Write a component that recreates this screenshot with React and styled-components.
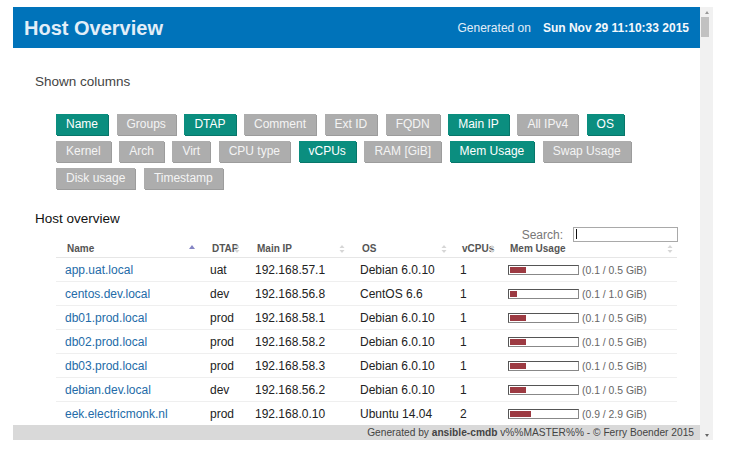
import React from 'react';
import styled, { createGlobalStyle } from 'styled-components';

const GlobalStyle = createGlobalStyle`
	html, body {
		margin: 0;
		padding: 0;
		background: #fff;
	}
	body {
		font-family: "Liberation Sans", Arial, sans-serif;
	}
`;

const Frame = styled.div`
	display: flex;
	width: 700px;
	height: 433px;
	margin: 7px 0 0 13px;
`;

const Viewport = styled.div`
	position: relative;
	flex: 1;
	overflow: hidden;
	background: #fff;
`;

const Scrollbar = styled.div`
	width: 13px;
	background: #f1f1f1;
	display: flex;
	flex-direction: column;
`;

const ScrollArrow = styled.div`
	height: 10px;
	display: flex;
	align-items: center;
	justify-content: center;
	padding-left: 1px;

	&::before {
		content: '';
		width: 0;
		height: 0;
		border-left: 2.5px solid transparent;
		border-right: 2.5px solid transparent;
		${(p) => (p.$down
			? 'border-top: 3px solid #666;'
			: 'border-bottom: 3px solid #999;')}
	}
`;

const ScrollThumb = styled.div`
	width: 8px;
	height: 20px;
	margin-left: 1px;
	background: #c1c1c1;
`;

const ScrollSpace = styled.div`
	flex: 1;
`;

const Header = styled.header`
	display: flex;
	align-items: center;
	justify-content: space-between;
	height: 41px;
	padding: 0 11px;
	background: #0073ba;
	color: #e2eef8;
`;

const Title = styled.h1`
	margin: 0;
	font-size: 20px;
	font-weight: bold;
	line-height: 1;
`;

const Generated = styled.div`
	display: flex;
	align-items: baseline;
	gap: 12px;
	font-size: 12px;

	b {
		color: #f4f8fc;
	}
`;

const Main = styled.main`
	padding: 0 22px;
`;

const SectionLabel = styled.div`
	margin-top: ${(p) => p.$top}px;
	font-size: 13.5px;
	line-height: 16px;
	color: ${(p) => p.$color || '#444'};
`;

const Indented = styled.div`
	margin-left: 21px;
`;

const ColumnButtons = styled(Indented)`
	display: flex;
	flex-wrap: wrap;
	column-gap: 8.5px;
	row-gap: 6px;
	margin-top: 24px;
`;

const ColumnButton = styled.span`
	height: 21px;
	line-height: 21px;
	padding: 0 10px;
	font-size: 12px;
	color: ${(p) => (p.$on ? '#fff' : '#f4f4f4')};
	background: ${(p) => (p.$on ? '#0b8e7f' : '#adadad')};
	box-shadow: 1px 1px 0 ${(p) => (p.$on ? '#08766a' : '#9c9c9c')};
	white-space: nowrap;
`;

const SearchRow = styled(Indented)`
	display: flex;
	justify-content: flex-end;
	align-items: center;
	gap: 10px;
	height: 15px;
	font-size: 12px;
	color: #777;
`;

const SearchBox = styled.div`
	box-sizing: border-box;
	width: 105px;
	height: 15px;
	border: 1px solid #a9a9a9;
	padding: 1px 0 0 2px;
`;

const Caret = styled.span`
	display: block;
	width: 1px;
	height: 10px;
	background: #111;
`;

const Table = styled.table`
	margin: -3px 0 0 21px;
	width: 621px;
	table-layout: fixed;
	border-collapse: separate;
	border-spacing: 0;
	font-size: 12px;
	color: #222;
`;

const Th = styled.th`
	position: relative;
	height: 18px;
	padding: 0 0 0 11px;
	text-align: left;
	font-size: 10px;
	font-weight: bold;
	color: #555;
	border-bottom: 1px solid #e6e6e6;
	white-space: nowrap;
`;

const SortIcon = styled.svg`
	position: absolute;
	right: ${(p) => p.$right}px;
	top: 5px;
`;

const Td = styled.td`
	height: 23px;
	padding: 0 0 0 9px;
	border-bottom: 1px solid #efefef;
	white-space: nowrap;
`;

const HostLink = styled.a`
	color: #236ba8;
	text-decoration: none;
`;

const Bar = styled.span`
	display: inline-block;
	box-sizing: border-box;
	width: 71px;
	height: 10px;
	padding: 1px;
	border: 1px solid #555;
	border-right-color: #888;
	border-bottom-color: #888;
	background: #fff;
	vertical-align: middle;
`;

const BarFill = styled.span`
	display: block;
	height: 100%;
	background: #9c3a42;
`;

const MemText = styled.span`
	margin-left: 3px;
	font-size: 10.4px;
	color: #666;
	vertical-align: middle;
`;

const Footer = styled.footer`
	position: absolute;
	left: 0;
	right: 0;
	bottom: 0;
	height: 15px;
	line-height: 15px;
	padding-right: 6px;
	text-align: right;
	font-size: 10.2px;
	color: #444;
	background: #d9d9d9;
`;

const columns = [
	['Name', true], ['Groups', false], ['DTAP', true], ['Comment', false],
	['Ext ID', false], ['FQDN', false], ['Main IP', true], ['All IPv4', false],
	['OS', true], ['Kernel', false], ['Arch', false], ['Virt', false],
	['CPU type', false], ['vCPUs', true], ['RAM [GiB]', false],
	['Mem Usage', true], ['Swap Usage', false], ['Disk usage', false],
	['Timestamp', false],
];

const heads = [
	{ label: 'Name', width: 145, right: 6, active: true },
	{ label: 'DTAP', width: 45, right: 6 },
	{ label: 'Main IP', width: 105, right: 6 },
	{ label: 'OS', width: 100, right: 4 },
	{ label: 'vCPUs', width: 48, right: 4 },
	{ label: 'Mem Usage', width: 178, right: 4 },
];

const hosts = [
	['app.uat.local', 'uat', '192.168.57.1', 'Debian 6.0.10', 1, 24, '0.1 / 0.5'],
	['centos.dev.local', 'dev', '192.168.56.8', 'CentOS 6.6', 1, 11, '0.1 / 1.0'],
	['db01.prod.local', 'prod', '192.168.58.1', 'Debian 6.0.10', 1, 24, '0.1 / 0.5'],
	['db02.prod.local', 'prod', '192.168.58.2', 'Debian 6.0.10', 1, 24, '0.1 / 0.5'],
	['db03.prod.local', 'prod', '192.168.58.3', 'Debian 6.0.10', 1, 24, '0.1 / 0.5'],
	['debian.dev.local', 'dev', '192.168.56.2', 'Debian 6.0.10', 1, 24, '0.1 / 0.5'],
	['eek.electricmonk.nl', 'prod', '192.168.0.10', 'Ubuntu 14.04', 2, 31, '0.9 / 2.9'],
];

const Sort = ({ active, right }) => (
	active ? (
		<SortIcon $right={right} width="6" height="8" viewBox="0 0 6 8">
			<path d="M3 1 L6 5 L0 5 Z" fill="#8585c4" />
		</SortIcon>
	) : (
		<SortIcon $right={right} width="6" height="10" viewBox="0 0 6 10">
			<path d="M3 1 L5.5 4 L0.5 4 Z" fill="#d6d6d6" />
			<path d="M3 9 L5.5 6 L0.5 6 Z" fill="#d6d6d6" />
		</SortIcon>
	)
);

export default function App() {
	return (
		<>
			<GlobalStyle />
			<Frame>
				<Viewport>
					<Header>
						<Title>Host Overview</Title>
						<Generated>
							<span>Generated on</span>
							<b>Sun Nov 29 11:10:33 2015</b>
						</Generated>
					</Header>
					<Main>
						<SectionLabel $top={26}>Shown columns</SectionLabel>
						<ColumnButtons>
							{columns.map(([name, on]) => (
								<ColumnButton key={name} $on={on}>{name}</ColumnButton>
							))}
						</ColumnButtons>
						<SectionLabel $top={22} $color="#111">Host overview</SectionLabel>
						<SearchRow>
							<span>Search:</span>
							<SearchBox><Caret /></SearchBox>
						</SearchRow>
						<Table>
							<colgroup>
								{heads.map((h) => <col key={h.label} style={{ width: h.width }} />)}
							</colgroup>
							<thead>
								<tr>
									{heads.map((h) => (
										<Th key={h.label}>
											{h.label}
											<Sort active={h.active} right={h.right} />
										</Th>
									))}
								</tr>
							</thead>
							<tbody>
								{hosts.map(([name, dtap, ip, os, cpus, pct, mem]) => (
									<tr key={name}>
										<Td><HostLink href="#">{name}</HostLink></Td>
										<Td>{dtap}</Td>
										<Td>{ip}</Td>
										<Td>{os}</Td>
										<Td>{cpus}</Td>
										<Td>
											<Bar><BarFill style={{ width: `${pct}%` }} /></Bar>
											<MemText>({mem} GiB)</MemText>
										</Td>
									</tr>
								))}
							</tbody>
						</Table>
					</Main>
					<Footer>
						Generated by <b>ansible-cmdb</b> v%%MASTER%% - © Ferry Boender 2015
					</Footer>
				</Viewport>
				<Scrollbar>
					<ScrollArrow />
					<ScrollThumb />
					<ScrollSpace />
					<ScrollArrow $down />
				</Scrollbar>
			</Frame>
		</>
	);
}
